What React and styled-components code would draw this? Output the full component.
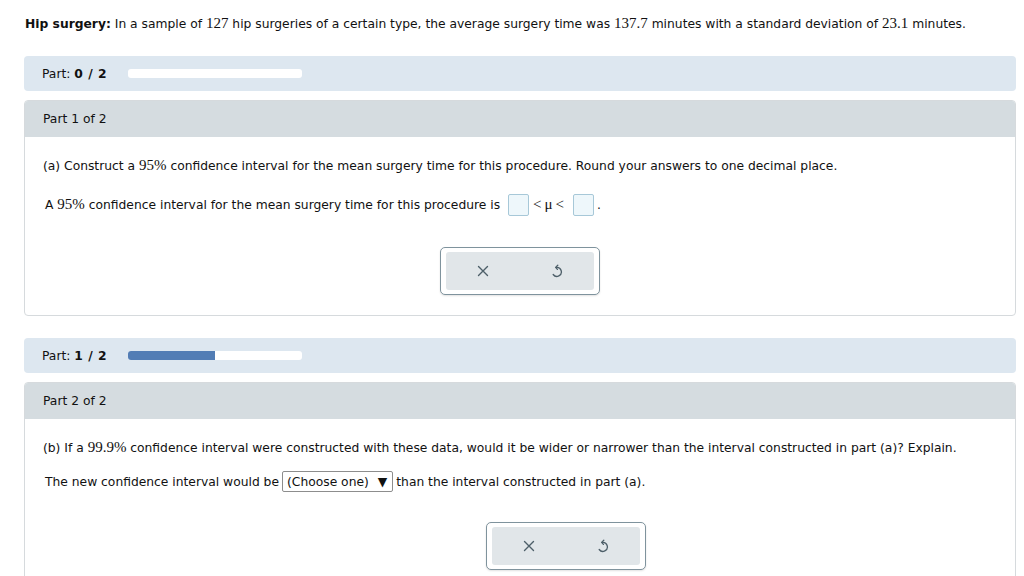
import React from "react";
import styled, { createGlobalStyle } from "styled-components";

const Global = createGlobalStyle`
  html, body { margin: 0; padding: 0; background: #fff; }
  body { font-family: "DejaVu Sans", Verdana, sans-serif; font-size: 12.3px; color: #111; }
`;

const Page = styled.div`
  width: 992px;
  padding: 15px 0 0 24px;
  height: 561px;
  overflow: hidden;
`;

const Intro = styled.p`
  margin: 0 0 23px 1px;
  line-height: 17px;
  font-size: 12.3px;
`;

const Num = styled.span`
  font-family: "Liberation Serif", "Times New Roman", serif;
  font-size: 15px;
`;

const PartBar = styled.div`
  display: flex;
  align-items: center;
  height: 35px;
  padding-left: 18px;
  background: #dde7f0;
  border-radius: 4px;
`;

const PartLabel = styled.span`
  width: 86px;
  b { font-weight: bold; letter-spacing: 0.5px; }
`;

const Track = styled.div`
  width: 174px;
  height: 9px;
  background: #fff;
  border-radius: 3px;
  overflow: hidden;
`;

const Fill = styled.div`
  height: 100%;
  background: #527db5;
`;

const Panel = styled.div`
  margin-top: 9px;
  border: 1px solid #d6dadd;
  border-radius: 4px;
  overflow: hidden;
  margin-bottom: ${(p) => p.$mb}px;
`;

const PanelHead = styled.div`
  height: 36px;
  display: flex;
  align-items: center;
  padding-left: 18px;
  background: #d5dce0;
`;

const PanelBody = styled.div`
  padding: 18px 18px 20px 18px;
`;

const Line = styled.div`
  display: flex;
  align-items: center;
  height: 21px;
  margin-bottom: ${(p) => p.$mb}px;
  padding-left: ${(p) => p.$pl || 0}px;
`;

const Box = styled.span`
  display: inline-block;
  width: 19px;
  height: 20px;
  border: 1px solid #a7c8d8;
  background: #eef7fb;
  border-radius: 2px;
  margin: 0 3px 0 4px;
`;

const Sym = styled.span`
  font-family: "Liberation Serif", "Times New Roman", serif;
  font-size: 15px;
  letter-spacing: 3px;
  margin: 0 2px 0 1px;
`;

const Select = styled.span`
  display: inline-flex;
  align-items: center;
  height: 19px;
  padding: 0 5px 0 4px;
  margin: 0 3px;
  border: 1px solid #8d8d8d;
  border-radius: 2px;
  gap: 9px;
`;

const ButtonRow = styled.div`
  display: flex;
  justify-content: ${(p) => (p.$offset ? "flex-start" : "center")};
  padding-left: ${(p) => p.$offset || 0}px;
  margin-top: ${(p) => p.$mt}px;
`;

const ButtonGroup = styled.div`
  width: 148px;
  height: 38px;
  padding: 4px 5px;
  border: 1px solid #7f939d;
  border-radius: 5px;
  background: #fff;
  box-shadow: 0 1px 2px rgba(0, 0, 0, 0.12);
`;

const ButtonInner = styled.div`
  display: flex;
  height: 100%;
  background: #e1e6e9;
  border-radius: 3px;
`;

const IconBtn = styled.button`
  flex: 1;
  border: 0;
  background: transparent;
  display: flex;
  align-items: center;
  justify-content: center;
  padding: 0;
  color: #4d5f69;
`;

const XIcon = () => (
  <svg width="12" height="12" viewBox="0 0 12 12" fill="none" stroke="currentColor" strokeWidth="1.4" strokeLinecap="round">
    <path d="M1.5 1.5 L10.5 10.5 M10.5 1.5 L1.5 10.5" />
  </svg>
);

const UndoIcon = () => (
  <svg width="12" height="14" viewBox="0 0 12 14" fill="none" stroke="currentColor" strokeWidth="1.3" strokeLinecap="round" strokeLinejoin="round">
    <path d="M5.2 3.4 A4.5 4.5 0 1 1 2.2 10.5" />
    <path d="M6.8 1.2 L4.6 3.4 L6.4 5.4" />
  </svg>
);

const Buttons = ({ mt, offset }) => (
  <ButtonRow $mt={mt} $offset={offset}>
    <ButtonGroup>
      <ButtonInner>
        <IconBtn aria-label="clear"><XIcon /></IconBtn>
        <IconBtn aria-label="undo"><UndoIcon /></IconBtn>
      </ButtonInner>
    </ButtonGroup>
  </ButtonRow>
);

export default function App() {
  return (
    <>
      <Global />
      <Page>
        <Intro>
          <b>Hip surgery:</b> In a sample of <Num>127</Num> hip surgeries of a certain type, the average surgery time was <Num>137.7</Num> minutes with a standard deviation of <Num>23.1</Num> minutes.
        </Intro>

        <PartBar>
          <PartLabel>Part: <b>0 / 2</b></PartLabel>
          <Track><Fill style={{ width: "0%" }} /></Track>
        </PartBar>

        <Panel $mb={22}>
          <PanelHead>Part 1 of 2</PanelHead>
          <PanelBody>
            <Line $mb={18}>(a) Construct a&nbsp;<Num>95%</Num>&nbsp;confidence interval for the mean surgery time for this procedure. Round your answers to one decimal place.</Line>
            <Line $mb={0} $pl={2}>
              A&nbsp;<Num>95%</Num>&nbsp;confidence interval for the mean surgery time for this procedure is&nbsp;
              <Box />
              <Sym>&lt;μ&lt;</Sym>
              <Box />.
            </Line>
            <Buttons mt={32} />
          </PanelBody>
        </Panel>

        <PartBar>
          <PartLabel>Part: <b>1 / 2</b></PartLabel>
          <Track><Fill style={{ width: "50%" }} /></Track>
        </PartBar>

        <Panel $mb={0}>
          <PanelHead>Part 2 of 2</PanelHead>
          <PanelBody>
            <Line $mb={13}>(b) If a&nbsp;<Num>99.9%</Num>&nbsp;confidence interval were constructed with these data, would it be wider or narrower than the interval constructed in part (a)? Explain.</Line>
            <Line $mb={0} $pl={2}>
              The new confidence interval would be
              <Select>(Choose one) <span>▼</span></Select>
              than the interval constructed in part (a).
            </Line>
            <Buttons mt={30} offset={443} />
          </PanelBody>
        </Panel>
      </Page>
    </>
  );
}
